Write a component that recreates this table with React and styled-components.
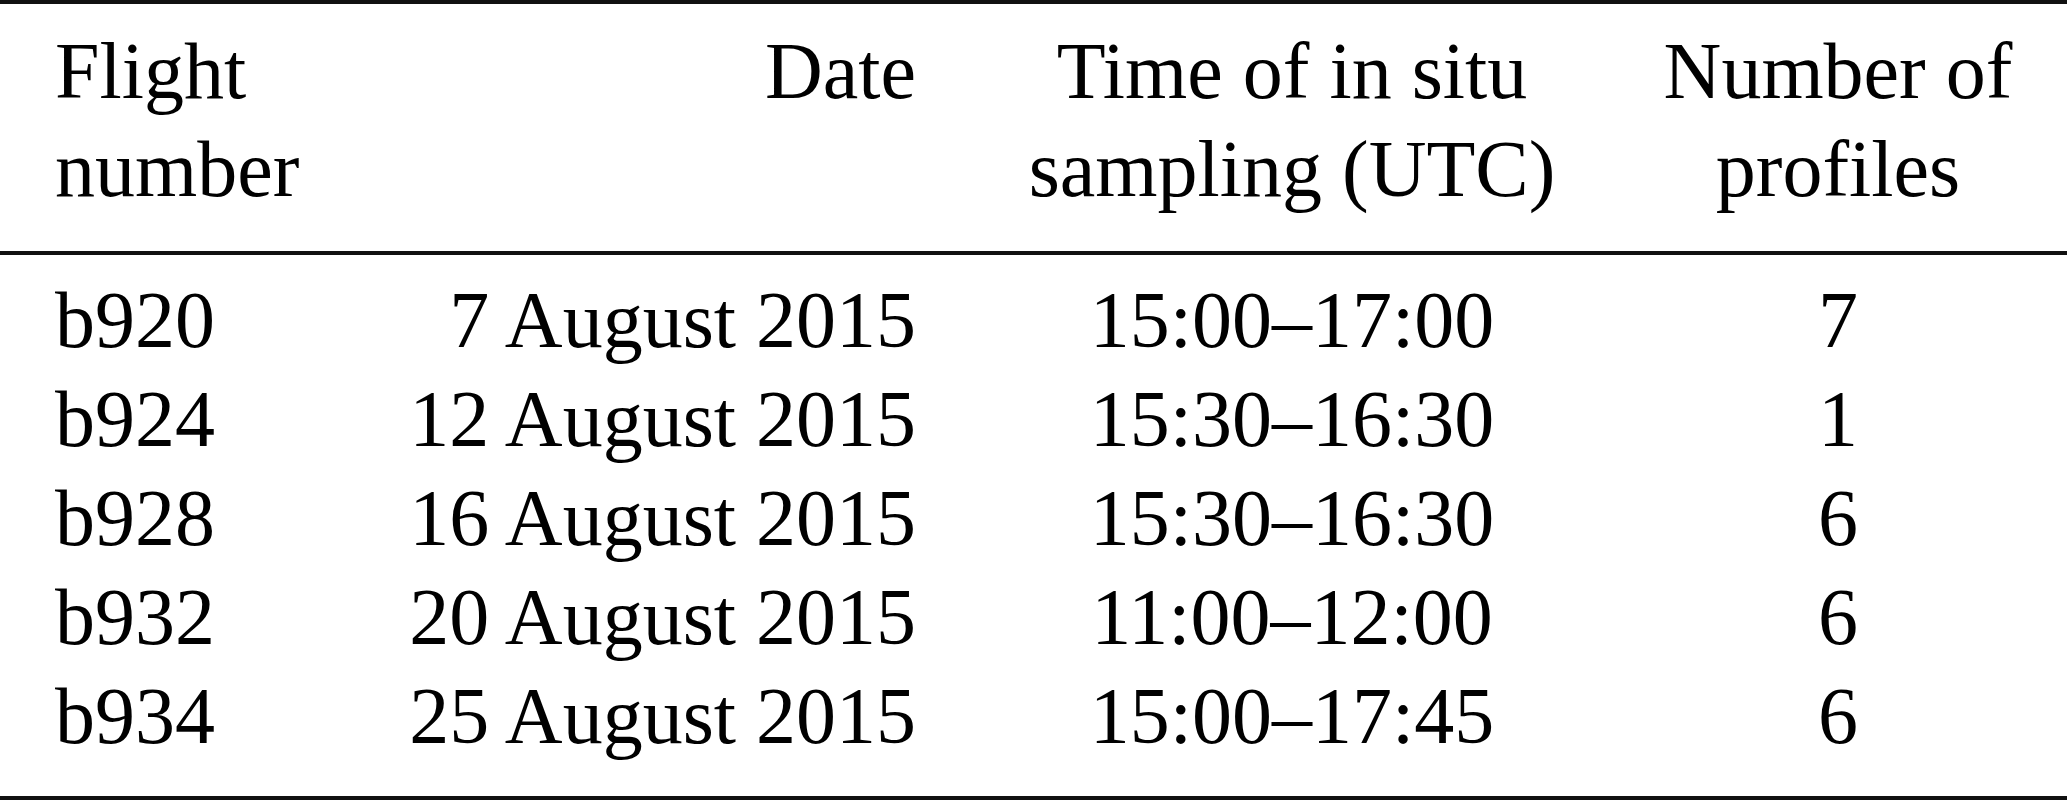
import React from 'react';
import styled, { createGlobalStyle } from 'styled-components';

const GlobalStyle = createGlobalStyle`
  html, body {
    margin: 0;
    padding: 0;
    background: #ffffff;
  }
`;

// table wrapper with the top and bottom rules
const Table = styled.div`
  width: 2067px;
  height: 800px;
  box-sizing: border-box;
  border-top: 4px solid #111;
  border-bottom: 4px solid #111;
  font-family: 'Liberation Serif', 'Times New Roman', serif;
  font-size: 80px;
  color: #000;
  display: flex;
  flex-direction: column;
`;

const Section = styled.div`
  display: grid;
  grid-template-columns: 300px 561px 752px 340px;
  padding: ${(p) => p.$pad};
  padding-left: 55px;
  line-height: ${(p) => p.$lh}px;
  border-bottom: ${(p) => (p.$rule ? '4px solid #111' : 'none')};
`;

const Cell = styled.div`
  white-space: nowrap;
  justify-self: ${(p) => p.$align};
  text-align: ${(p) => (p.$align === 'end' ? 'right' : p.$align === 'center' ? 'center' : 'left')};
`;

const rows = [
  ['b920', '7 August 2015', '15:00–17:00', '7'],
  ['b924', '12 August 2015', '15:30–16:30', '1'],
  ['b928', '16 August 2015', '15:30–16:30', '6'],
  ['b932', '20 August 2015', '11:00–12:00', '6'],
  ['b934', '25 August 2015', '15:00–17:45', '6'],
];

const aligns = ['start', 'end', 'center', 'center'];

export default function App() {
  return (
    <>
      <GlobalStyle />
      <Table>
        <Section $pad="18px 0 33px" $lh={98} $rule>
          <Cell $align="start">Flight<br />number</Cell>
          <Cell $align="end">Date</Cell>
          <Cell $align="center">Time of in situ<br />sampling (UTC)</Cell>
          <Cell $align="center">Number of<br />profiles</Cell>
        </Section>
        <Section $pad="16px 0 30px" $lh={99}>
          {rows.map((row) =>
            row.map((value, i) => (
              <Cell key={row[0] + i} $align={aligns[i]}>{value}</Cell>
            ))
          )}
        </Section>
      </Table>
    </>
  );
}
